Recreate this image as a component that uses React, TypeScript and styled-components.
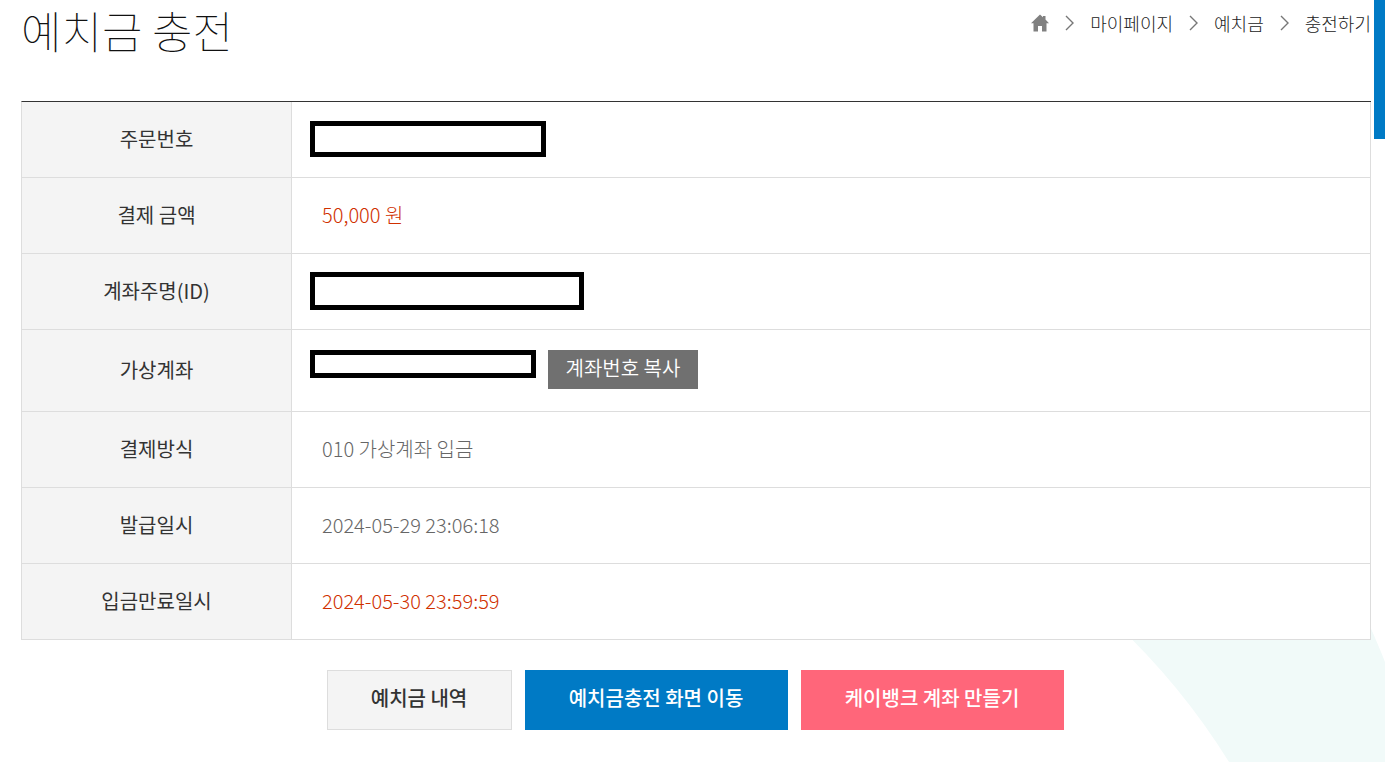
import React from "react";
import styled, { createGlobalStyle } from "styled-components";

const GlobalStyle = createGlobalStyle`
  * { box-sizing: border-box; }
  body {
    margin: 0;
    background: #fff;
    color: #333;
    font-family: "Noto Sans CJK KR", sans-serif;
    font-weight: 300;
    font-size: 20px;
    line-height: 30px;
  }
`;

const Page = styled.div`
  position: relative;
  min-height: 100vh;
  padding: 0 14px 32px 21px;
`;

const Backdrop = styled.svg`
  position: absolute;
  right: 0;
  bottom: 0;
  z-index: -1;
`;

const QuickBar = styled.aside`
  position: absolute;
  top: 0;
  right: 0;
  width: 11px;
  height: 139px;
  background: #007ac5;
`;

const Header = styled.header`
  display: flex;
  justify-content: space-between;
  align-items: flex-start;
  height: 101px;
`;

const Title = styled.h1`
  margin: 0;
  font-size: 44px;
  line-height: 60px;
  font-weight: 100;
  color: #111;
`;

const Crumbs = styled.nav`
  display: flex;
  align-items: center;
  height: 46px;
  gap: 16px;
  font-size: 18px;
`;

const CrumbLink = styled.a`
  display: flex;
  color: #222;
  text-decoration: none;
`;

const Table = styled.table`
  width: 100%;
  border-spacing: 0;
  border-top: 1px solid #333;
  border-left: 1px solid #ddd;
  background: #fff;
`;

const Row = styled.tr<{ $tall?: boolean }>`
  height: ${(p) => (p.$tall ? 82 : 76)}px;
`;

const Label = styled.th`
  width: 270px;
  padding: 0 0 1px;
  border: solid #ddd;
  border-width: 0 1px 1px 0;
  background: #f4f4f4;
  font-weight: 400;
  text-align: center;
`;

const Value = styled.td<{ $accent?: boolean; $masked?: boolean }>`
  padding: 0 0 2px ${(p) => (p.$masked ? 18 : 30)}px;
  border: solid #ddd;
  border-width: 0 1px 1px 0;
  color: ${(p) => (p.$accent ? "#d03000" : "#666")};
`;

const Inline = styled.div`
  display: flex;
  align-items: flex-start;
  gap: 12px;
`;

const Mask = styled.div<{ $w: number; $h: number }>`
  width: ${(p) => p.$w}px;
  height: ${(p) => p.$h}px;
  border: 5px solid #000;
  background: #fff;
`;

const CopyButton = styled.button`
  width: 150px;
  height: 39px;
  padding: 0 0 3px;
  border: 0;
  background: #707070;
  color: #fff;
  font: inherit;
  font-weight: 350;
`;

const Actions = styled.div`
  display: flex;
  justify-content: center;
  gap: 13px;
  padding: 30px 2px 0 0;
`;

const Action = styled.button<{ $tone: "plain" | "blue" | "pink" }>`
  width: ${(p) => (p.$tone === "plain" ? 185 : 263)}px;
  height: 60px;
  padding: 0 0 4px;
  border: ${(p) => (p.$tone === "plain" ? "1px solid #ddd" : "0")};
  background: ${(p) => ({ plain: "#f4f4f4", blue: "#007ac5", pink: "#ff667a" })[p.$tone]};
  color: ${(p) => (p.$tone === "plain" ? "#333" : "#fff")};
  font: inherit;
  font-weight: 500;
`;

const HomeIcon = () => (
  <svg width="18" height="18" viewBox="0 0 18 18" fill="#808080" aria-hidden="true">
    <path d="M9 0.500 L12 3.300 V2 H14.500 V5.600 L18 9.300 H15.500 V17.500 H11 V12 H7 V17.500 H2.500 V9.300 H0 Z" />
  </svg>
);

const Chevron = () => (
  <svg width="9" height="16" viewBox="0 0 9 16" fill="none" stroke="#777" strokeWidth="1.4" aria-hidden="true">
    <path d="M1 1 L8 8 L1 15" />
  </svg>
);

export default function App() {
  return (
    <>
      <GlobalStyle />
      <Page>
        <Backdrop width="285" height="140" viewBox="0 0 285 140" aria-hidden="true">
          <path d="M14 0 A690 690 0 0 1 129 140 H285 V40 Q278 22 268 0 Z" fill="#f1faf9" />
        </Backdrop>
        <QuickBar />
        <Header>
          <Title>예치금 충전</Title>
          <Crumbs aria-label="현재 위치">
            <CrumbLink href="#" aria-label="홈"><HomeIcon /></CrumbLink>
            <Chevron />
            <CrumbLink href="#">마이페이지</CrumbLink>
            <Chevron />
            <CrumbLink href="#">예치금</CrumbLink>
            <Chevron />
            <CrumbLink href="#">충전하기</CrumbLink>
          </Crumbs>
        </Header>
        <main>
          <Table>
            <tbody>
              <Row>
                <Label scope="row">주문번호</Label>
                <Value $masked><Mask $w={236} $h={36} /></Value>
              </Row>
              <Row>
                <Label scope="row">결제 금액</Label>
                <Value $accent>50,000 원</Value>
              </Row>
              <Row>
                <Label scope="row">계좌주명(ID)</Label>
                <Value $masked><Mask $w={274} $h={38} /></Value>
              </Row>
              <Row $tall>
                <Label scope="row">가상계좌</Label>
                <Value $masked>
                  <Inline>
                    <Mask $w={226} $h={28} />
                    <CopyButton type="button">계좌번호 복사</CopyButton>
                  </Inline>
                </Value>
              </Row>
              <Row>
                <Label scope="row">결제방식</Label>
                <Value>010 가상계좌 입금</Value>
              </Row>
              <Row>
                <Label scope="row">발급일시</Label>
                <Value>2024-05-29 23:06:18</Value>
              </Row>
              <Row>
                <Label scope="row">입금만료일시</Label>
                <Value $accent>2024-05-30 23:59:59</Value>
              </Row>
            </tbody>
          </Table>
          <Actions>
            <Action type="button" $tone="plain">예치금 내역</Action>
            <Action type="button" $tone="blue">예치금충전 화면 이동</Action>
            <Action type="button" $tone="pink">케이뱅크 계좌 만들기</Action>
          </Actions>
        </main>
      </Page>
    </>
  );
}
